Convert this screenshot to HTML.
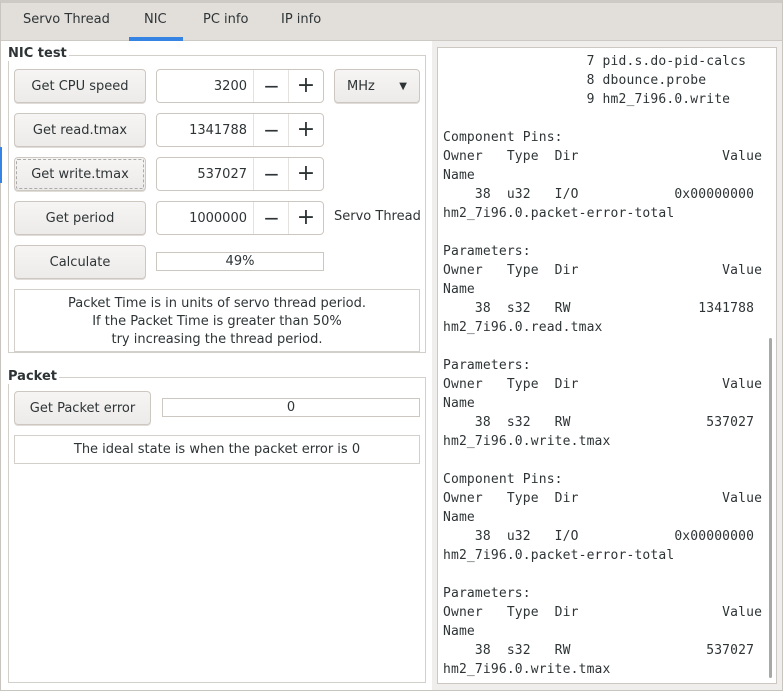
<!DOCTYPE html>
<html><head><style>
*{box-sizing:border-box;margin:0;padding:0}
body{width:783px;height:691px;background:#fff;font-family:"DejaVu Sans","Liberation Sans",sans-serif;font-size:13px;color:#2e3436;position:relative;overflow:hidden}
.a{position:absolute}
.win{left:0;top:0;width:783px;height:691px;border:1px solid #c8c4bf;border-top:3px solid #cdc9c4}
.tabbar{left:1px;top:3px;width:781px;height:38px;background:#e2dfdb;border-bottom:1px solid #cdc9c4}
.tab{top:12px;font-size:13px;color:#2e3436}
.btn{background:linear-gradient(#f6f5f4,#edebe9);border:1px solid #cdc7c2;border-radius:4px;text-align:center;line-height:33px;height:34px;box-shadow:0 1px 0 #e0dcd8}
.spin{width:168px;height:34px;border:1px solid #cdc7c2;border-radius:4px;background:#fff}
.spin .v{position:absolute;right:76px;top:0;line-height:33px}
.spin .m{position:absolute;left:96px;top:0;width:36px;height:32px;border-left:1px solid #e4e1de;font-size:20px;text-align:center;line-height:32px}
.spin .p{position:absolute;left:131px;top:0;width:35px;height:32px;border-left:1px solid #e4e1de;font-size:22px;text-align:center;line-height:32px}
.frame{border:1px solid #d3d0cc}
.lbl{font-weight:bold}
.field{border:1px solid #cdc7c2;text-align:center;line-height:17px;height:19px}
.box{border:1px solid #d3d0cc;text-align:center}
pre{font-family:"DejaVu Sans Mono","Liberation Mono",monospace;font-size:13px;line-height:19px;color:#2e3436;letter-spacing:0.15px}
</style></head><body>
<div class="a win"></div>
<div class="a tabbar"></div>
<div class="a tab" style="left:23px">Servo Thread</div>
<div class="a tab" style="left:144px">NIC</div>
<div class="a tab" style="left:203px">PC info</div>
<div class="a tab" style="left:281px">IP info</div>
<div class="a" style="left:129px;top:37px;width:54px;height:4px;background:#3584e4"></div>
<div class="a" style="left:0;top:147px;width:2px;height:36px;background:#3584e4"></div>

<div class="a frame" style="left:8px;top:55px;width:418px;height:298px"></div>
<div class="a lbl" style="left:8px;top:46px;background:#fff;padding-right:2px">NIC test</div>

<div class="a btn" style="left:14px;top:69px;width:132px">Get CPU speed</div>
<div class="a spin" style="left:156px;top:69px"><span class="v">3200</span><span class="m">−</span><span class="p">+</span></div>
<div class="a btn" style="left:334px;top:69px;width:86px;text-align:left;padding-left:12px">MHz<span style="position:absolute;right:12px;top:0;font-size:10px">▼</span></div>

<div class="a btn" style="left:14px;top:113px;width:132px">Get read.tmax</div>
<div class="a spin" style="left:156px;top:113px"><span class="v">1341788</span><span class="m">−</span><span class="p">+</span></div>

<div class="a btn" style="left:14px;top:157px;width:132px;outline:1px dashed #aaa;outline-offset:-3px">Get write.tmax</div>
<div class="a spin" style="left:156px;top:157px"><span class="v">537027</span><span class="m">−</span><span class="p">+</span></div>

<div class="a btn" style="left:14px;top:201px;width:132px">Get period</div>
<div class="a spin" style="left:156px;top:201px"><span class="v">1000000</span><span class="m">−</span><span class="p">+</span></div>
<div class="a" style="left:334px;top:209px">Servo Thread</div>

<div class="a btn" style="left:14px;top:245px;width:132px">Calculate</div>
<div class="a field" style="left:156px;top:252px;width:168px">49%</div>

<div class="a box" style="left:14px;top:289px;width:406px;height:63px;padding-top:5px;line-height:18px">Packet Time is in units of servo thread period.<br>If the Packet Time is greater than 50%<br>try increasing the thread period.</div>

<div class="a frame" style="left:8px;top:377px;width:418px;height:306px"></div>
<div class="a lbl" style="left:8px;top:369px;background:#fff;padding-right:2px">Packet</div>
<div class="a btn" style="left:14px;top:391px;width:137px">Get Packet error</div>
<div class="a field" style="left:162px;top:398px;width:258px">0</div>
<div class="a box" style="left:14px;top:435px;width:406px;height:29px;line-height:28px">The ideal state is when the packet error is 0</div>

<div class="a" style="left:432px;top:41px;width:350px;height:649px;background:#f0eeec"></div>
<div class="a" style="left:437px;top:47px;width:340px;height:637px;background:#fff;border:1px solid #cdc7c2"></div>
<div class="a" style="left:769px;top:338px;width:3px;height:340px;background:#a7a9a9;border-radius:2px"></div>
<pre class="a" style="left:443px;top:52px">                  7 pid.s.do-pid-calcs
                  8 dbounce.probe
                  9 hm2_7i96.0.write

Component Pins:
Owner   Type  Dir                  Value
Name
    38  u32   I/O            0x00000000
hm2_7i96.0.packet-error-total

Parameters:
Owner   Type  Dir                  Value
Name
    38  s32   RW                1341788
hm2_7i96.0.read.tmax

Parameters:
Owner   Type  Dir                  Value
Name
    38  s32   RW                 537027
hm2_7i96.0.write.tmax

Component Pins:
Owner   Type  Dir                  Value
Name
    38  u32   I/O            0x00000000
hm2_7i96.0.packet-error-total

Parameters:
Owner   Type  Dir                  Value
Name
    38  s32   RW                 537027
hm2_7i96.0.write.tmax</pre>
</body></html>
